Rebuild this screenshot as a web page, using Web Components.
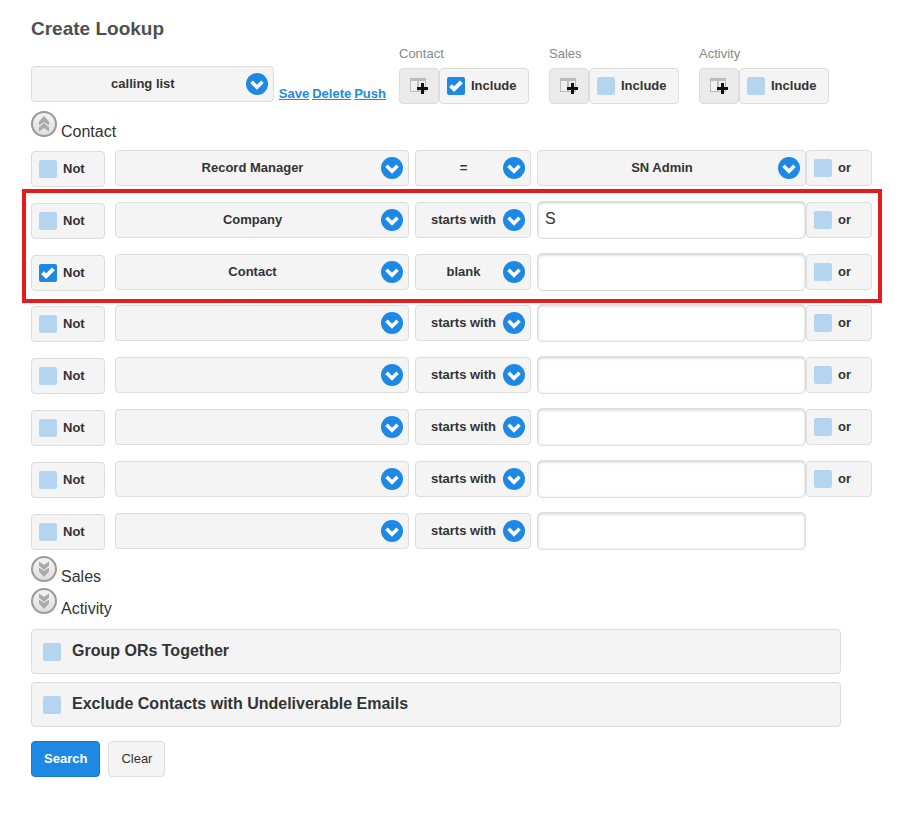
<!DOCTYPE html>
<html lang="en">
<head>
  <meta charset="UTF-8">
  <meta name="viewport" content="width=device-width, initial-scale=1.0">
  <title>Create Lookup</title>
  <style>
    :root {
      --blue: #1e88e5;
      --blue-light: #b5d4f0;
      --panel: #f4f4f4;
      --line: #dddddd;
      --text: #333333;
    }

    body {
      margin: 0;
      background: #ffffff;
      color: var(--text);
      font-family: "Liberation Sans", Arial, sans-serif;
      font-size: 13px;
    }
  </style>
</head>
<body>
  <lookup-page></lookup-page>

  <script>
    // Attach an open shadow root and fill it
    function render(element, html) {
      element.attachShadow({ mode: 'open' }).innerHTML = html;
    }

    /**
     * <lookup-select label="Field" value="Company">
     */
    class LookupSelect extends HTMLElement {
      constructor() {
        super();
        render(this, `
          <style>
            :host {
              display: grid;
              min-width: 0;
            }

            select, svg {
              grid-area: 1 / 1;
            }

            select {
              appearance: none;
              box-sizing: border-box;
              width: 100%;
              height: 36px;
              margin: 0;
              padding: 0 30px 2px 11px;
              border: 1px solid var(--line);
              border-radius: 4px;
              background: var(--panel);
              color: var(--text);
              font: bold 13px "Liberation Sans", Arial, sans-serif;
              text-align: center;
              text-align-last: center;
            }

            svg {
              justify-self: end;
              align-self: center;
              margin-right: 6px;
              pointer-events: none;
            }
          </style>
          <select aria-label="${this.getAttribute('label')}">
            <option>${this.getAttribute('value') || ''}</option>
          </select>
          <svg width="22" height="22" viewBox="0 0 22 22" aria-hidden="true">
            <circle cx="11" cy="11" r="11" fill="#1e88e5"></circle>
            <path d="M5.500 8.800 11 14.300l5.500-5.500" fill="none" stroke="#fff" stroke-width="3.500"></path>
          </svg>
        `);
      }
    }

    /**
     * <lookup-check checked>Not</lookup-check>
     * size="large" gives the full width bar
     */
    class LookupCheck extends HTMLElement {
      constructor() {
        super();
        render(this, `
          <style>
            :host {
              display: block;
            }

            label {
              box-sizing: border-box;
              display: flex;
              align-items: center;
              gap: 6px;
              height: 36px;
              padding: 0 7px;
              border: 1px solid var(--line);
              border-radius: 4px;
              background: var(--panel);
              font-size: 13px;
              font-weight: bold;
              white-space: nowrap;
            }

            :host([size="large"]) label {
              gap: 11px;
              height: 45px;
              padding: 0 11px;
              font-size: 16px;
            }

            .box {
              display: grid;
              flex: none;
            }

            input, svg {
              grid-area: 1 / 1;
            }

            input {
              appearance: none;
              width: 18px;
              height: 18px;
              margin: 0;
              border-radius: 2px;
              background: var(--blue-light);
            }

            input:checked {
              background: var(--blue);
            }

            svg {
              display: none;
              pointer-events: none;
            }

            input:checked + svg {
              display: block;
            }

            .text {
              padding-bottom: 2px;
            }
          </style>
          <label>
            <span class="box">
              <input type="checkbox" ${this.hasAttribute('checked') ? 'checked' : ''}>
              <svg width="18" height="18" viewBox="0 0 18 18" aria-hidden="true">
                <path d="M3.500 8.600 7.100 12.200 14.400 4.900" fill="none" stroke="#fff" stroke-width="4"></path>
              </svg>
            </span>
            <span class="text"><slot></slot></span>
          </label>
        `);
      }
    }

    /**
     * <lookup-include checked>Contact</lookup-include>
     */
    class LookupInclude extends HTMLElement {
      constructor() {
        super();
        render(this, `
          <style>
            :host {
              display: block;
              width: 130px;
            }

            .title {
              display: block;
              margin-bottom: 6px;
              color: #888888;
              line-height: 16px;
            }

            .controls {
              display: flex;
            }

            button {
              box-sizing: border-box;
              display: grid;
              place-items: center;
              width: 40px;
              height: 36px;
              margin: 0;
              padding: 0;
              border: 1px solid var(--line);
              border-radius: 4px;
              background: #ebebeb;
            }

            lookup-check {
              flex: 1;
            }
          </style>
          <span class="title"><slot></slot></span>
          <div class="controls">
            <button type="button" aria-label="Add columns">
              <svg width="18" height="16" viewBox="0 0 18 16" aria-hidden="true">
                <path d="M0 0h16v14H0z" fill="#bbb"></path>
                <path d="M1 3h6v10H1zM9 3h6v10H9z" fill="#f0f0f0"></path>
                <path d="M12.500 5v11M7 10.500h11" fill="none" stroke="#111" stroke-width="3"></path>
              </svg>
            </button>
            <lookup-check ${this.hasAttribute('checked') ? 'checked' : ''}>Include</lookup-check>
          </div>
        `);
      }
    }

    /**
     * <lookup-toggle open>Contact</lookup-toggle>
     */
    class LookupToggle extends HTMLElement {
      constructor() {
        super();
        const open = this.hasAttribute('open');
        render(this, `
          <style>
            :host {
              display: block;
            }

            button {
              display: flex;
              align-items: baseline;
              gap: 4px;
              height: 32px;
              margin: 0;
              padding: 0;
              border: 0;
              background: none;
              color: var(--text);
              font: 16px "Liberation Sans", Arial, sans-serif;
            }
          </style>
          <button type="button" aria-expanded="${open}">
            <svg width="26" height="26" viewBox="0 0 26 26" aria-hidden="true">
              <defs>
                <linearGradient id="shade" x1="0" y1="0" x2="0" y2="1">
                  <stop offset="0" stop-color="#f4f4f4"></stop>
                  <stop offset="1" stop-color="#dedede"></stop>
                </linearGradient>
              </defs>
              <circle cx="13" cy="13" r="12" fill="url(#shade)" stroke="#999" stroke-width="2"></circle>
              <g fill="#a9a9a9" ${open ? '' : 'transform="rotate(180 13 13)"'}>
                <path d="M13 5l5 5.500v4l-5-3.500-5 3.500v-4z"></path>
                <path d="M13 12l5 4.500v4l-5-3.500-5 3.500v-4z"></path>
              </g>
            </svg>
            <span><slot></slot></span>
          </button>
        `);
      }
    }

    /**
     * One line of the query.
     * Attributes: not, field, operator, value, picker (value is a drop-down), last (no "or")
     */
    class LookupRow extends HTMLElement {
      constructor() {
        super();
        const attr = (name) => this.getAttribute(name) || '';
        const value = this.hasAttribute('picker')
          ? `<lookup-select label="Value" value="${attr('value')}"></lookup-select>`
          : `<input type="text" aria-label="Value" value="${attr('value')}">`;

        render(this, `
          <style>
            :host {
              display: grid;
              grid-template-columns: 74px minmax(0, 310fr) 116px minmax(0, 275fr) 66px;
              align-items: center;
              min-height: 38px;
            }

            .not {
              align-self: end;
            }

            .field {
              margin-left: 10px;
              margin-right: 6px;
            }

            .value {
              margin-left: 6px;
            }

            input {
              box-sizing: border-box;
              display: block;
              width: 100%;
              height: 38px;
              margin: 0;
              padding: 0 7px 2px;
              border: 1px solid var(--line);
              border-radius: 5px;
              background: #ffffff;
              box-shadow: inset 0 1px 3px #cccccc;
              color: var(--text);
              font: 16px "Liberation Sans", Arial, sans-serif;
            }
          </style>
          <lookup-check class="not" ${this.hasAttribute('not') ? 'checked' : ''}>Not</lookup-check>
          <lookup-select class="field" label="Field" value="${attr('field')}"></lookup-select>
          <lookup-select label="Operator" value="${attr('operator')}"></lookup-select>
          <div class="value">${value}</div>
          ${this.hasAttribute('last') ? '' : '<lookup-check>or</lookup-check>'}
        `);
      }
    }

    class LookupPage extends HTMLElement {
      constructor() {
        super();
        render(this, `
          <style>
            :host {
              display: block;
              padding: 17px 48px 36px 31px;
            }

            h1 {
              margin: 0 0 5px;
              color: #4f4f4f;
              font-size: 19px;
              line-height: 24px;
            }

            header {
              display: flex;
              align-items: flex-end;
              gap: 13px;
              margin-bottom: 7px;
            }

            .saved {
              display: flex;
              align-items: flex-end;
              gap: 5px;
              width: 355px;
              padding-bottom: 2px;
            }

            .saved lookup-select {
              flex: 1;
            }

            .includes {
              display: flex;
              gap: 20px;
            }

            nav {
              display: flex;
              gap: 3px;
            }

            a {
              color: var(--blue);
              font-weight: bold;
              line-height: 16px;
            }

            .rows {
              padding: 6px 0;
            }

            .group {
              display: grid;
              gap: 14px;
            }

            .marked {
              margin: 2px -10px 1px -9px;
              padding: 8px 6px 8px 5px;
              border: 4px solid #e51c1e;
            }

            .options {
              display: grid;
              gap: 8px;
              margin: 9px 31px 14px 0;
            }

            footer {
              display: flex;
              gap: 8px;
            }

            footer button {
              height: 36px;
              margin: 0;
              padding: 0 12px 2px;
              border: 1px solid var(--line);
              border-radius: 4px;
              background: var(--panel);
              color: var(--text);
              font: 13px "Liberation Sans", Arial, sans-serif;
            }

            footer .primary {
              border-color: #1976d2;
              background: var(--blue);
              color: #ffffff;
              font-weight: bold;
            }
          </style>

          <h1>Create Lookup</h1>
          <header>
            <div class="saved">
              <lookup-select label="Saved lookup" value="calling list"></lookup-select>
              <nav>
                <a href="#save">Save</a>
                <a href="#delete">Delete</a>
                <a href="#push">Push</a>
              </nav>
            </div>
            <div class="includes">
              <lookup-include checked>Contact</lookup-include>
              <lookup-include>Sales</lookup-include>
              <lookup-include>Activity</lookup-include>
            </div>
          </header>

          <lookup-toggle open>Contact</lookup-toggle>
          <div class="rows">
            <lookup-row field="Record Manager" operator="=" value="SN Admin" picker></lookup-row>
            <div class="group marked">
              <lookup-row field="Company" operator="starts with" value="S"></lookup-row>
              <lookup-row not field="Contact" operator="blank"></lookup-row>
            </div>
            <div class="group">
              <lookup-row operator="starts with"></lookup-row>
              <lookup-row operator="starts with"></lookup-row>
              <lookup-row operator="starts with"></lookup-row>
              <lookup-row operator="starts with"></lookup-row>
              <lookup-row operator="starts with" last></lookup-row>
            </div>
          </div>
          <lookup-toggle>Sales</lookup-toggle>
          <lookup-toggle>Activity</lookup-toggle>

          <div class="options">
            <lookup-check size="large">Group ORs Together</lookup-check>
            <lookup-check size="large">Exclude Contacts with Undeliverable Emails</lookup-check>
          </div>
          <footer>
            <button type="submit" class="primary">Search</button>
            <button type="reset">Clear</button>
          </footer>
        `);
      }
    }

    customElements.define('lookup-select', LookupSelect);
    customElements.define('lookup-check', LookupCheck);
    customElements.define('lookup-include', LookupInclude);
    customElements.define('lookup-toggle', LookupToggle);
    customElements.define('lookup-row', LookupRow);
    customElements.define('lookup-page', LookupPage);
  </script>
</body>
</html>
